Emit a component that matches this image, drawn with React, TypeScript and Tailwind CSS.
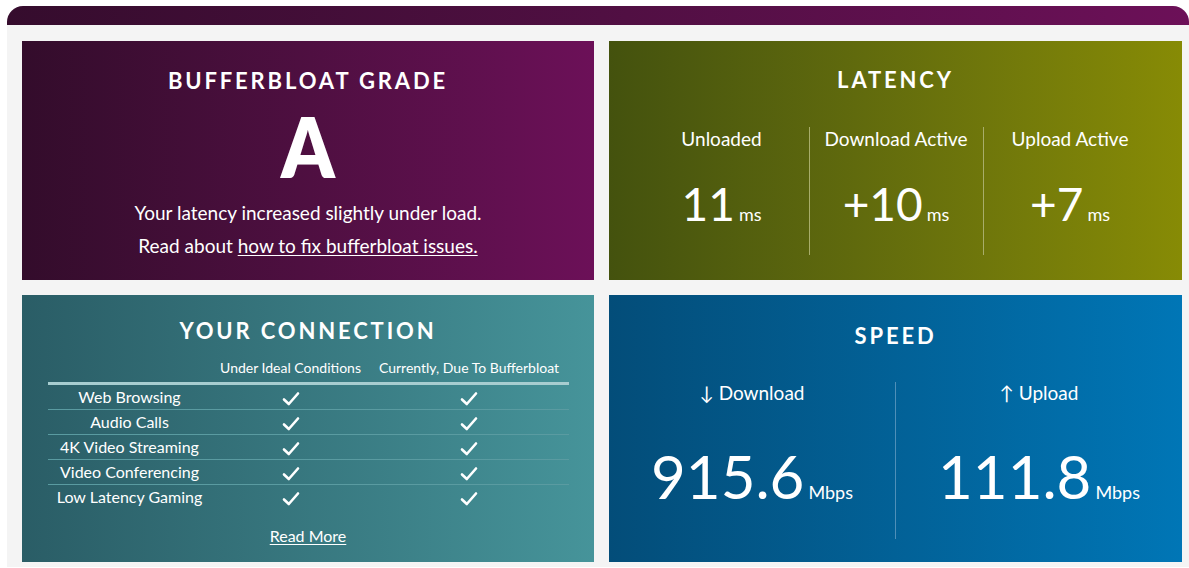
import React from 'react';

const font = { fontFamily: 'Lato, "Noto Sans", sans-serif' };

function Check() {
  return (
    <svg width="18" height="16" viewBox="0 0 18 16" className="inline-block">
      <path d="M2 8.5 L6.8 13 L16 2.5" fill="none" stroke="white" strokeWidth="2.6" strokeLinecap="round" strokeLinejoin="round" />
    </svg>
  );
}

const rows = ['Web Browsing', 'Audio Calls', '4K Video Streaming', 'Video Conferencing', 'Low Latency Gaming'];

function App() {
  return (
    <div className="w-[1189px] h-[568px] overflow-hidden bg-white text-white" style={font}>
      <div className="ml-[7px] mt-[6px]">
        {/* header strip */}
        <div className="h-[19px] rounded-t-[16px] bg-gradient-to-r from-[#350c2d] to-[#6c1058]" />
        <div className="bg-[#f4f4f4] pl-[15px] pr-[7px] pt-[16px] pb-[5px] grid grid-cols-[572px_573px] grid-rows-[239px_267px] gap-[15px]">
          {/* Bufferbloat grade */}
          <div className="bg-gradient-to-r from-[#330c2b] to-[#6c1058] flex flex-col items-center pt-[29px]">
            <h2 className="text-[22px] font-bold tracking-[0.13em] leading-none">BUFFERBLOAT GRADE</h2>
            <div className="text-[84px] font-extrabold leading-none mt-[12px] scale-x-90">A</div>
            <p className="text-[19px] mt-[8px] leading-[33px]">Your latency increased slightly under load.</p>
            <p className="text-[19px] leading-[33px]">
              Read about <a className="underline underline-offset-2">how to fix bufferbloat issues.</a>
            </p>
          </div>

          {/* Latency */}
          <div className="bg-gradient-to-r from-[#44520e] to-[#878b05] flex flex-col items-center pt-[28px]">
            <h2 className="text-[22px] font-bold tracking-[0.13em] leading-none">LATENCY</h2>
            <div className="flex mt-[36px]">
              {[
                ['Unloaded', '11'],
                ['Download Active', '+10'],
                ['Upload Active', '+7'],
              ].map(([label, val], i) => (
                <div
                  key={label}
                  className={
                    'w-[174px] h-[128px] flex flex-col items-center pt-[1px] ' +
                    (i > 0 ? 'border-l border-[#a8ad6a]' : '')
                  }
                >
                  <div className="text-[19px] leading-[22px]">{label}</div>
                  <div className="mt-[31px] flex items-baseline">
                    <span className="text-[46px] leading-none">{val}</span>
                    <span className="text-[18px] ml-[4px]">ms</span>
                  </div>
                </div>
              ))}
            </div>
          </div>

          {/* Your connection */}
          <div className="bg-gradient-to-r from-[#2a5d66] to-[#46949a] flex flex-col items-center pt-[25px]">
            <h2 className="text-[22px] font-bold tracking-[0.13em] leading-none">YOUR CONNECTION</h2>
            <table className="w-[521px] mt-[13px] border-collapse text-[16px]">
              <thead>
                <tr className="border-b-[3px] border-[#a7cdd0]">
                  <th className="w-[164px]" />
                  <th className="w-[158px] font-normal text-[14px] leading-[26px] pb-[1px]">Under Ideal Conditions</th>
                  <th className="font-normal text-[14px] leading-[26px] pb-[1px]">Currently, Due To Bufferbloat</th>
                </tr>
              </thead>
              <tbody>
                {rows.map((r, i) => (
                  <tr key={r} className={i < rows.length - 1 ? 'border-b border-[#5a9ba1]' : ''}>
                    <td className="text-center h-[25px] leading-[24px]">{r}</td>
                    <td className="text-center">
                      <Check />
                    </td>
                    <td className="text-center">
                      <Check />
                    </td>
                  </tr>
                ))}
              </tbody>
            </table>
            <a className="underline underline-offset-2 text-[16px] mt-[14px]">Read More</a>
          </div>

          {/* Speed */}
          <div className="bg-gradient-to-r from-[#034d79] to-[#0076b6] flex flex-col items-center pt-[30px]">
            <h2 className="text-[22px] font-bold tracking-[0.13em] leading-none">SPEED</h2>
            <div className="flex w-full mt-[35px]">
              {[
                ['↓ Download', '915.6'],
                ['↑ Upload', '111.8'],
              ].map(([label, val], i) => (
                <div
                  key={label}
                  className={
                    'flex-1 h-[157px] flex flex-col items-center ' + (i > 0 ? 'border-l border-[#4f8fb8]' : '')
                  }
                >
                  <div className="text-[19px] leading-[22px]">{label}</div>
                  <div className="mt-[42px] flex items-baseline">
                    <span className="text-[60px] leading-none">{val}</span>
                    <span className="text-[18px] ml-[4px]">Mbps</span>
                  </div>
                </div>
              ))}
            </div>
          </div>
        </div>
      </div>
    </div>
  );
}

export default App;
